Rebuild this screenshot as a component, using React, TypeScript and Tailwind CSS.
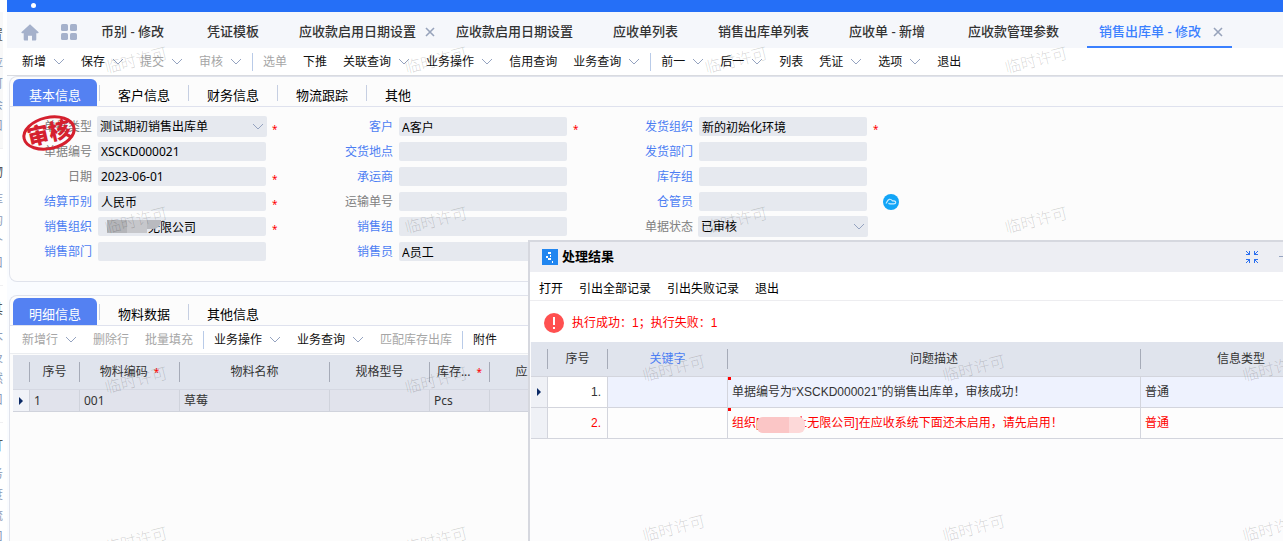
import { useId } from "react"
import clsx from "clsx"

type Action = {
  label: string
  menu?: boolean
  muted?: boolean
  divider?: boolean
}

type FieldData = {
  label: string
  value?: string
  link?: boolean
  required?: boolean
  select?: boolean
  masked?: boolean
  cloud?: boolean
}

const sideGroups = [
  { title: "设置", items: ["应", "可", "会", "口"] },
  { title: "货物", items: ["库", "的", "个", "口"] },
  { title: "其", items: ["木", "及", "然", "口"] },
  { title: "订", items: ["务", "度", "流", "口"] },
]

const pageTabs = [
  { label: "币别 - 修改", width: "w-[106px]" },
  { label: "凭证模板", width: "w-[92px]" },
  { label: "应收款启用日期设置", width: "w-[157px]", closable: true },
  { label: "应收款启用日期设置", width: "w-[157px]" },
  { label: "应收单列表", width: "w-[105px]" },
  { label: "销售出库单列表", width: "w-[131px]" },
  { label: "应收单 - 新增", width: "w-[119px]" },
  { label: "应收款管理参数", width: "w-[131px]" },
  { label: "销售出库单 - 修改", width: "w-[145px]", closable: true, active: true },
]

const mainActions: Action[] = [
  { label: "新增", menu: true },
  { label: "保存", menu: true },
  { label: "提交", menu: true, muted: true },
  { label: "审核", menu: true, muted: true, divider: true },
  { label: "选单", muted: true },
  { label: "下推" },
  { label: "关联查询", menu: true },
  { label: "业务操作", menu: true },
  { label: "信用查询" },
  { label: "业务查询", menu: true, divider: true },
  { label: "前一", menu: true },
  { label: "后一", menu: true },
  { label: "列表" },
  { label: "凭证", menu: true },
  { label: "选项", menu: true },
  { label: "退出" },
]

const detailActions: Action[] = [
  { label: "新增行", menu: true, muted: true },
  { label: "删除行", muted: true },
  { label: "批量填充", muted: true, divider: true },
  { label: "业务操作", menu: true },
  { label: "业务查询", menu: true },
  { label: "匹配库存出库", muted: true, divider: true },
  { label: "附件" },
]

const fieldColumns: FieldData[][] = [
  [
    { label: "单据类型", value: "测试期初销售出库单", select: true, required: true },
    { label: "单据编号", value: "XSCKD000021" },
    { label: "日期", value: "2023-06-01", required: true },
    { label: "结算币别", value: "人民币", link: true, required: true },
    { label: "销售组织", value: "无限公司", link: true, required: true, masked: true },
    { label: "销售部门", link: true },
  ],
  [
    { label: "客户", value: "A客户", link: true, required: true },
    { label: "交货地点", link: true },
    { label: "承运商", link: true },
    { label: "运输单号" },
    { label: "销售组", link: true },
    { label: "销售员", value: "A员工", link: true },
  ],
  [
    { label: "发货组织", value: "新的初始化环境", link: true, required: true },
    { label: "发货部门", link: true },
    { label: "库存组", link: true },
    { label: "仓管员", link: true, cloud: true },
    { label: "单据状态", value: "已审核", select: true },
  ],
]

const detailColumns = [
  { label: "序号", width: "w-[50px]", value: "1" },
  { label: "物料编码", width: "w-[100px]", value: "001", required: true },
  { label: "物料名称", width: "w-[150px]", value: "草莓" },
  { label: "规格型号", width: "w-[100px]", value: "" },
  { label: "库存...", width: "w-[60px]", value: "Pcs", required: true },
  { label: "应发数量", width: "w-[100px]", value: "" },
]

function Chevron() {
  return (
    <svg width="12" height="7" viewBox="0 0 12 7" fill="none" stroke="#95a3c0" aria-hidden="true">
      <path d="M1 1l5 5 5-5" />
    </svg>
  )
}

function Close() {
  return (
    <svg width="10" height="10" viewBox="0 0 10 10" stroke="#97a3bb" strokeWidth="1.6" aria-hidden="true">
      <path d="M1 1l8 8M9 1l-8 8" />
    </svg>
  )
}

function RowMarker() {
  return (
    <svg width="4" height="8" viewBox="0 0 4 8" fill="#0b2a66" className="mx-auto" aria-hidden="true">
      <path d="M0 0l4 4-4 4z" />
    </svg>
  )
}

function Watermark({ className, count }: { className: string; count: number }) {
  return (
    <div
      aria-hidden="true"
      className={clsx(
        "pointer-events-none absolute grid auto-rows-[160px] grid-cols-[repeat(4,300px)] place-items-center",
        className
      )}
    >
      {Array.from({ length: count }, (_, i) => (
        <span key={i} className="-rotate-14 text-base leading-4 font-light text-black/16">
          临时许可
        </span>
      ))}
    </div>
  )
}

function Sidebar() {
  return (
    <nav className="mr-1 w-[3px] shrink-0 overflow-hidden pt-3">
      {sideGroups.map((group, i) => (
        <div
          key={group.title}
          className={clsx(
            "flex h-[137px] flex-col items-end border-b border-[#f0f0f2] pt-3",
            i === 0 && "bg-[#f8f8f8]"
          )}
        >
          <span className="mb-2 text-[13px] leading-5 whitespace-nowrap text-[#555]">
            {group.title}
          </span>
          {group.items.map((item, n) => (
            <a key={n} href="#" className="text-xs leading-[21px] text-[#8b9bb8]">
              {item}
            </a>
          ))}
        </div>
      ))}
    </nav>
  )
}

function PageTabs() {
  return (
    <div className="flex h-9 shrink-0 bg-[#f5f7fb]">
      <button type="button" aria-label="首页" className="ml-3.5 w-[18px]">
        <svg width="18" height="17" viewBox="0 0 18 17" fill="#a5b1cb" className="mt-1">
          <path d="M9 0.3L0.6 8c-.5.5-.2 1.2.5 1.2h1.6v6.1c0 .8.5 1.3 1.3 1.3h3v-4.8h4v4.8h3c.8 0 1.3-.5 1.3-1.3V9.2h1.6c.7 0 1-.7.5-1.2z" />
        </svg>
      </button>
      <button type="button" aria-label="应用" className="mr-3 ml-[22px] w-4">
        <svg width="16" height="16" viewBox="0 0 16 16" fill="#a5b1cb" className="mt-1">
          <rect width="7" height="7" rx="1.6" />
          <rect x="9" width="7" height="7" rx="1.6" />
          <rect y="9" width="7" height="7" rx="1.6" />
          <rect x="9" y="9" width="7" height="7" rx="1.6" />
        </svg>
      </button>
      {pageTabs.map((tab, i) => (
        <div
          key={i}
          className={clsx(
            "flex shrink-0 items-center justify-between border-b-2 pt-1.5 pr-[9px] pl-3 text-[13px] font-medium whitespace-nowrap",
            tab.width,
            tab.active ? "border-[#3a80ff] text-[#3a80ff]" : "border-transparent text-[#333]"
          )}
        >
          <button type="button">{tab.label}</button>
          {tab.closable && (
            <button type="button" aria-label="关闭">
              <Close />
            </button>
          )}
        </div>
      ))}
    </div>
  )
}

function Toolbar({ actions, className }: { actions: Action[]; className?: string }) {
  return (
    <div className={clsx("flex shrink-0 items-center gap-4 bg-white text-xs whitespace-nowrap", className)}>
      {actions.map((action) => (
        <div key={action.label} className="flex items-center gap-4">
          <button
            type="button"
            className={clsx(
              "flex items-center gap-[7px]",
              action.muted ? "text-[#a6a6a6]" : "text-[#111]"
            )}
          >
            {action.label}
            {action.menu && <Chevron />}
          </button>
          {action.divider && <span className="-mx-1.5 h-[18px] w-px bg-[#b9cbe8]" />}
        </div>
      ))}
    </div>
  )
}

function SectionTabs({ tabs }: { tabs: string[] }) {
  return (
    <div className="flex border-b border-[#dfe2ee] pt-0.5 pl-[3px] text-[13px]">
      {tabs.map((tab, i) => (
        <div key={tab} className="flex w-[89px] shrink-0 items-center gap-0.5">
          <button
            type="button"
            className={clsx(
              "h-[27px] w-[84px] rounded-t-md pt-1 pl-4 text-left leading-5",
              i === 0 ? "bg-[#5481f2] text-white" : "text-black"
            )}
          >
            {tab}
          </button>
          {i < tabs.length - 1 && <span className="h-4 w-px bg-[#c6cfe2]" />}
        </div>
      ))}
    </div>
  )
}

function Field({ field }: { field: FieldData }) {
  const id = useId()
  return (
    <div className="flex h-[19px] items-center">
      <label
        htmlFor={id}
        className={clsx("mr-1.5 w-[82px] text-right", field.link ? "text-[#4c7ef3]" : "text-[#808080]")}
      >
        {field.label}
      </label>
      {field.select ? (
        <div className="relative -mx-px">
          <select
            id={id}
            className="block h-[21px] w-[170px] appearance-none rounded-xs bg-[#e6e9ef] pl-[3px] text-black"
          >
            <option>{field.value}</option>
          </select>
          <span className="pointer-events-none absolute top-[7px] right-[3px]">
            <Chevron />
          </span>
        </div>
      ) : (
        <div className="relative">
          <input
            id={id}
            readOnly
            defaultValue={field.value ?? ""}
            className={clsx(
              "block h-[19px] w-[168px] rounded-xs bg-[#e6e9ef] text-black",
              field.masked ? "pl-[50px]" : "pl-[3px]"
            )}
          />
          {field.masked && (
            <span className="absolute top-[3px] left-[9px] flex h-[13px]">
              <span className="w-5 bg-[#b4b5b9]" />
              <span className="w-5 bg-[#c6c7cb]" />
              <span className="h-[9px] w-3.5 rounded-br-lg bg-[#b9babf]" />
            </span>
          )}
        </div>
      )}
      {field.required && <span className="mt-1 ml-1.5 text-[10px] leading-3 text-[#f00]">*</span>}
      {field.cloud && (
        <button type="button" aria-label="云服务" className="ml-4">
          <svg width="16" height="16" viewBox="0 0 16 16" fill="none">
            <circle cx="8" cy="8" r="8" fill="#12a5f7" />
            <path
              d="M2.8 9.2C4 9.3 3.800 6 6.300 5.300c1.700-.4 2.500.8 3.200 1.600 1.800-.3 3.200.3 3.200 1.500 0 1-.9 1.400-2 1.400H7.200c-.9 0-1.400-.4-1.500-1"
              stroke="#c9ecff"
              strokeWidth="1.200"
            />
          </svg>
        </button>
      )}
    </div>
  )
}

function AuditStamp() {
  return (
    <svg
      width="56"
      height="40"
      viewBox="0 0 56 40"
      className="absolute top-9 left-[11px]"
      role="img"
      aria-label="审核"
    >
      <g transform="rotate(-13 28 20)">
        <ellipse cx="28" cy="20" rx="25.500" ry="15.500" fill="none" stroke="#d5202e" strokeWidth="3" />
        <text x="28" y="28" textAnchor="middle" fontSize="22" fontWeight="900" fill="#d5202e">
          审核
        </text>
      </g>
    </svg>
  )
}

function BasicInfo() {
  return (
    <section className="relative ml-0.5 h-[206px] shrink-0 rounded-l-lg border border-r-0 border-[#e0e3ec] bg-[#fcfcfc]">
      <SectionTabs tabs={["基本信息", "客户信息", "财务信息", "物流跟踪", "其他"]} />
      <div className="grid grid-cols-[301px_300px_300px] pt-2.5 text-xs">
        {fieldColumns.map((fields, i) => (
          <div key={i} className="flex flex-col gap-1.5">
            {fields.map((field) => (
              <Field key={field.label} field={field} />
            ))}
          </div>
        ))}
      </div>
      <AuditStamp />
    </section>
  )
}

function DetailInfo() {
  return (
    <section className="mt-[13px] ml-0.5 flex-1 rounded-tl-lg border-t border-l border-[#e0e3ec] bg-[#fcfcfc]">
      <SectionTabs tabs={["明细信息", "物料数据", "其他信息"]} />
      <Toolbar actions={detailActions} className="h-7 border-b border-[#ebedf0] pl-3" />
      <table className="mt-px ml-[3px] w-[577px] table-fixed border-separate border-spacing-0 text-xs text-[#333]">
        <thead>
          <tr className="h-[35px] bg-[#e0e4ed]">
            <th className="w-[17px] border-b border-[#d5d8e2] p-0">
              <div className="h-5 border-r border-[#a6abb8]" />
            </th>
            {detailColumns.map((col) => (
              <th key={col.label} className={clsx("border-b border-[#d5d8e2] p-0 font-normal", col.width)}>
                <div className="h-5 border-r border-[#a6abb8] leading-5">
                  {col.label}
                  {col.required && <span className="ml-1.5 text-[10px] text-[#f00]">*</span>}
                </div>
              </th>
            ))}
          </tr>
        </thead>
        <tbody>
          <tr className="h-[22px] bg-[#e1e3ec]">
            <td className="border-r border-b border-[#d0d3dc] bg-[#f1f3f8] p-0">
              <RowMarker />
            </td>
            {detailColumns.map((col) => (
              <td key={col.label} className="border-r border-b border-[#d0d3dc] p-0 pl-1">
                {col.value}
              </td>
            ))}
          </tr>
        </tbody>
      </table>
    </section>
  )
}

function RestoreIcon() {
  const arrow = "M0 0h1v1h1v1h1V0h1v4H0V3h2V2H1V1H0z"
  return (
    <svg width="12" height="12" viewBox="0 0 12 12" fill="#2a6ff0" shapeRendering="crispEdges" aria-hidden="true">
      <path d={arrow} />
      <path d={arrow} transform="translate(12 0) scale(-1 1)" />
      <path d={arrow} transform="translate(0 12) scale(1 -1)" />
      <path d={arrow} transform="translate(12 12) scale(-1 -1)" />
    </svg>
  )
}

function ResultDialog() {
  return (
    <div
      role="dialog"
      aria-label="处理结果"
      className="absolute top-60 -right-[58px] bottom-0 left-[528px] overflow-hidden border-t-2 border-l-2 border-[#d6d8df] bg-[#fcfcfd] pl-px font-['Liberation_Sans','Noto_Sans_CJK_SC',sans-serif] text-xs text-black"
    >
      <div className="-ml-px flex h-[30px] items-center bg-[#edeef3] pl-3">
        <svg width="16" height="16" viewBox="0 0 16 16" shapeRendering="crispEdges" aria-hidden="true">
          <rect width="16" height="16" rx="1" fill="#2186f0" />
          <path d="M6 3h3v2H6zM4 7h2v2H4zM8 6h1v2H8zM6 9h3v2H6zM10 12h1v2h-1z" fill="#fff" />
        </svg>
        <h2 className="ml-1 text-[13px] font-bold">处理结果</h2>
        <button type="button" aria-label="还原" className="ml-auto">
          <RestoreIcon />
        </button>
        <button type="button" aria-label="最小化" className="mr-[50px] ml-[21px]">
          <svg width="12" height="12" viewBox="0 0 12 12" stroke="#97a5c2" aria-hidden="true">
            <path d="M0 5.500h12" />
          </svg>
        </button>
      </div>
      <div className="-ml-px flex h-[29px] items-center gap-4 border-b border-[#ededf0] bg-white pt-1.5 pl-[9px]">
        <button type="button">打开</button>
        <button type="button">引出全部记录</button>
        <button type="button">引出失败记录</button>
        <button type="button">退出</button>
      </div>
      <div className="-ml-px flex h-[41px] items-center gap-2 bg-white pt-0.5 pl-3.5 text-[#f00]">
        <svg width="20" height="20" viewBox="0 0 20 20" aria-hidden="true">
          <circle cx="10" cy="10" r="10" fill="#ff5050" />
          <path d="M9 4h2v8H9zM9 14h2v2H9z" fill="#fff" />
        </svg>
        <p>执行成功：1；执行失败：1</p>
      </div>
      <table className="w-full table-fixed border-separate border-spacing-0 text-[#333]">
        <thead>
          <tr className="h-[35px] bg-[#e0e4ed]">
            <th className="w-[17px] border-b border-[#d3d5dd] p-0">
              <div className="h-5 border-r border-[#a6abb8]" />
            </th>
            <th className="w-[60px] border-b border-[#d3d5dd] p-0 font-normal">
              <div className="h-5 border-r border-[#a6abb8] leading-5">序号</div>
            </th>
            <th className="w-[120px] border-b border-[#d3d5dd] p-0 font-normal">
              <div className="h-5 border-r border-[#a6abb8] leading-5 text-[#4c7ef3]">关键字</div>
            </th>
            <th className="border-b border-[#d3d5dd] p-0 font-normal">
              <div className="h-5 border-r border-[#a6abb8] leading-5">问题描述</div>
            </th>
            <th className="w-[200px] border-b border-[#d3d5dd] p-0 font-normal">信息类型</th>
          </tr>
        </thead>
        <tbody>
          <tr className="h-[31px] bg-[#eef2fe]">
            <td className="border-r border-b border-[#d3d5dd] bg-[#eff1f6] p-0">
              <RowMarker />
            </td>
            <td className="border-r border-b border-[#d3d5dd] bg-white p-0 pr-1.5 text-right">1.</td>
            <td className="border-r border-b border-[#d3d5dd] p-0" />
            <td className="relative border-r border-b border-[#d3d5dd] p-0 pl-1">
              <span className="absolute top-0 left-0 size-[3px] bg-[#f00]" />
              单据编号为“XSCKD000021”的销售出库单，审核成功！
            </td>
            <td className="border-b border-[#d3d5dd] p-0 pl-1">普通</td>
          </tr>
          <tr className="h-[31px] bg-[#fdfdfd] text-[#f00]">
            <td className="border-r border-b border-[#d3d5dd] bg-[#eff1f6] p-0" />
            <td className="border-r border-b border-[#d3d5dd] p-0 pr-1.5 text-right">2.</td>
            <td className="border-r border-b border-[#d3d5dd] p-0" />
            <td className="relative border-r border-b border-[#d3d5dd] p-0 pl-1">
              <span className="absolute top-0 left-0 size-[3px] bg-[#f00]" />
              组织[
              <span className="relative inline-block w-12 text-right">
                土
                <span className="absolute top-0.5 -left-0.5 flex h-4 w-12 overflow-hidden rounded-md bg-[#fdd9d9]">
                  <span className="w-8 bg-[#fbc6c6]" />
                </span>
              </span>
              无限公司]在应收系统下面还未启用，请先启用！
            </td>
            <td className="border-b border-[#d3d5dd] p-0 pl-1">普通</td>
          </tr>
        </tbody>
      </table>
      <Watermark className="top-[47px] -left-1.5" count={8} />
    </div>
  )
}

export default function App() {
  return (
    <div className="relative flex h-screen overflow-hidden bg-white font-['Noto_Sans','Noto_Sans_CJK_SC',sans-serif]">
      <Sidebar />
      <main className="flex min-w-0 flex-1 flex-col bg-[#fafcff]">
        <header className="h-3 shrink-0 bg-[#256ff7] pt-[3px] pl-6">
          <div className="size-[5px] rounded-full bg-white" />
        </header>
        <PageTabs />
        <Toolbar actions={mainActions} className="h-7 border-b border-[#d9dbe0] pl-[15px]" />
        <BasicInfo />
        <DetailInfo />
      </main>
      <Watermark className="-top-5 -left-3.5" count={16} />
      <ResultDialog />
    </div>
  )
}
